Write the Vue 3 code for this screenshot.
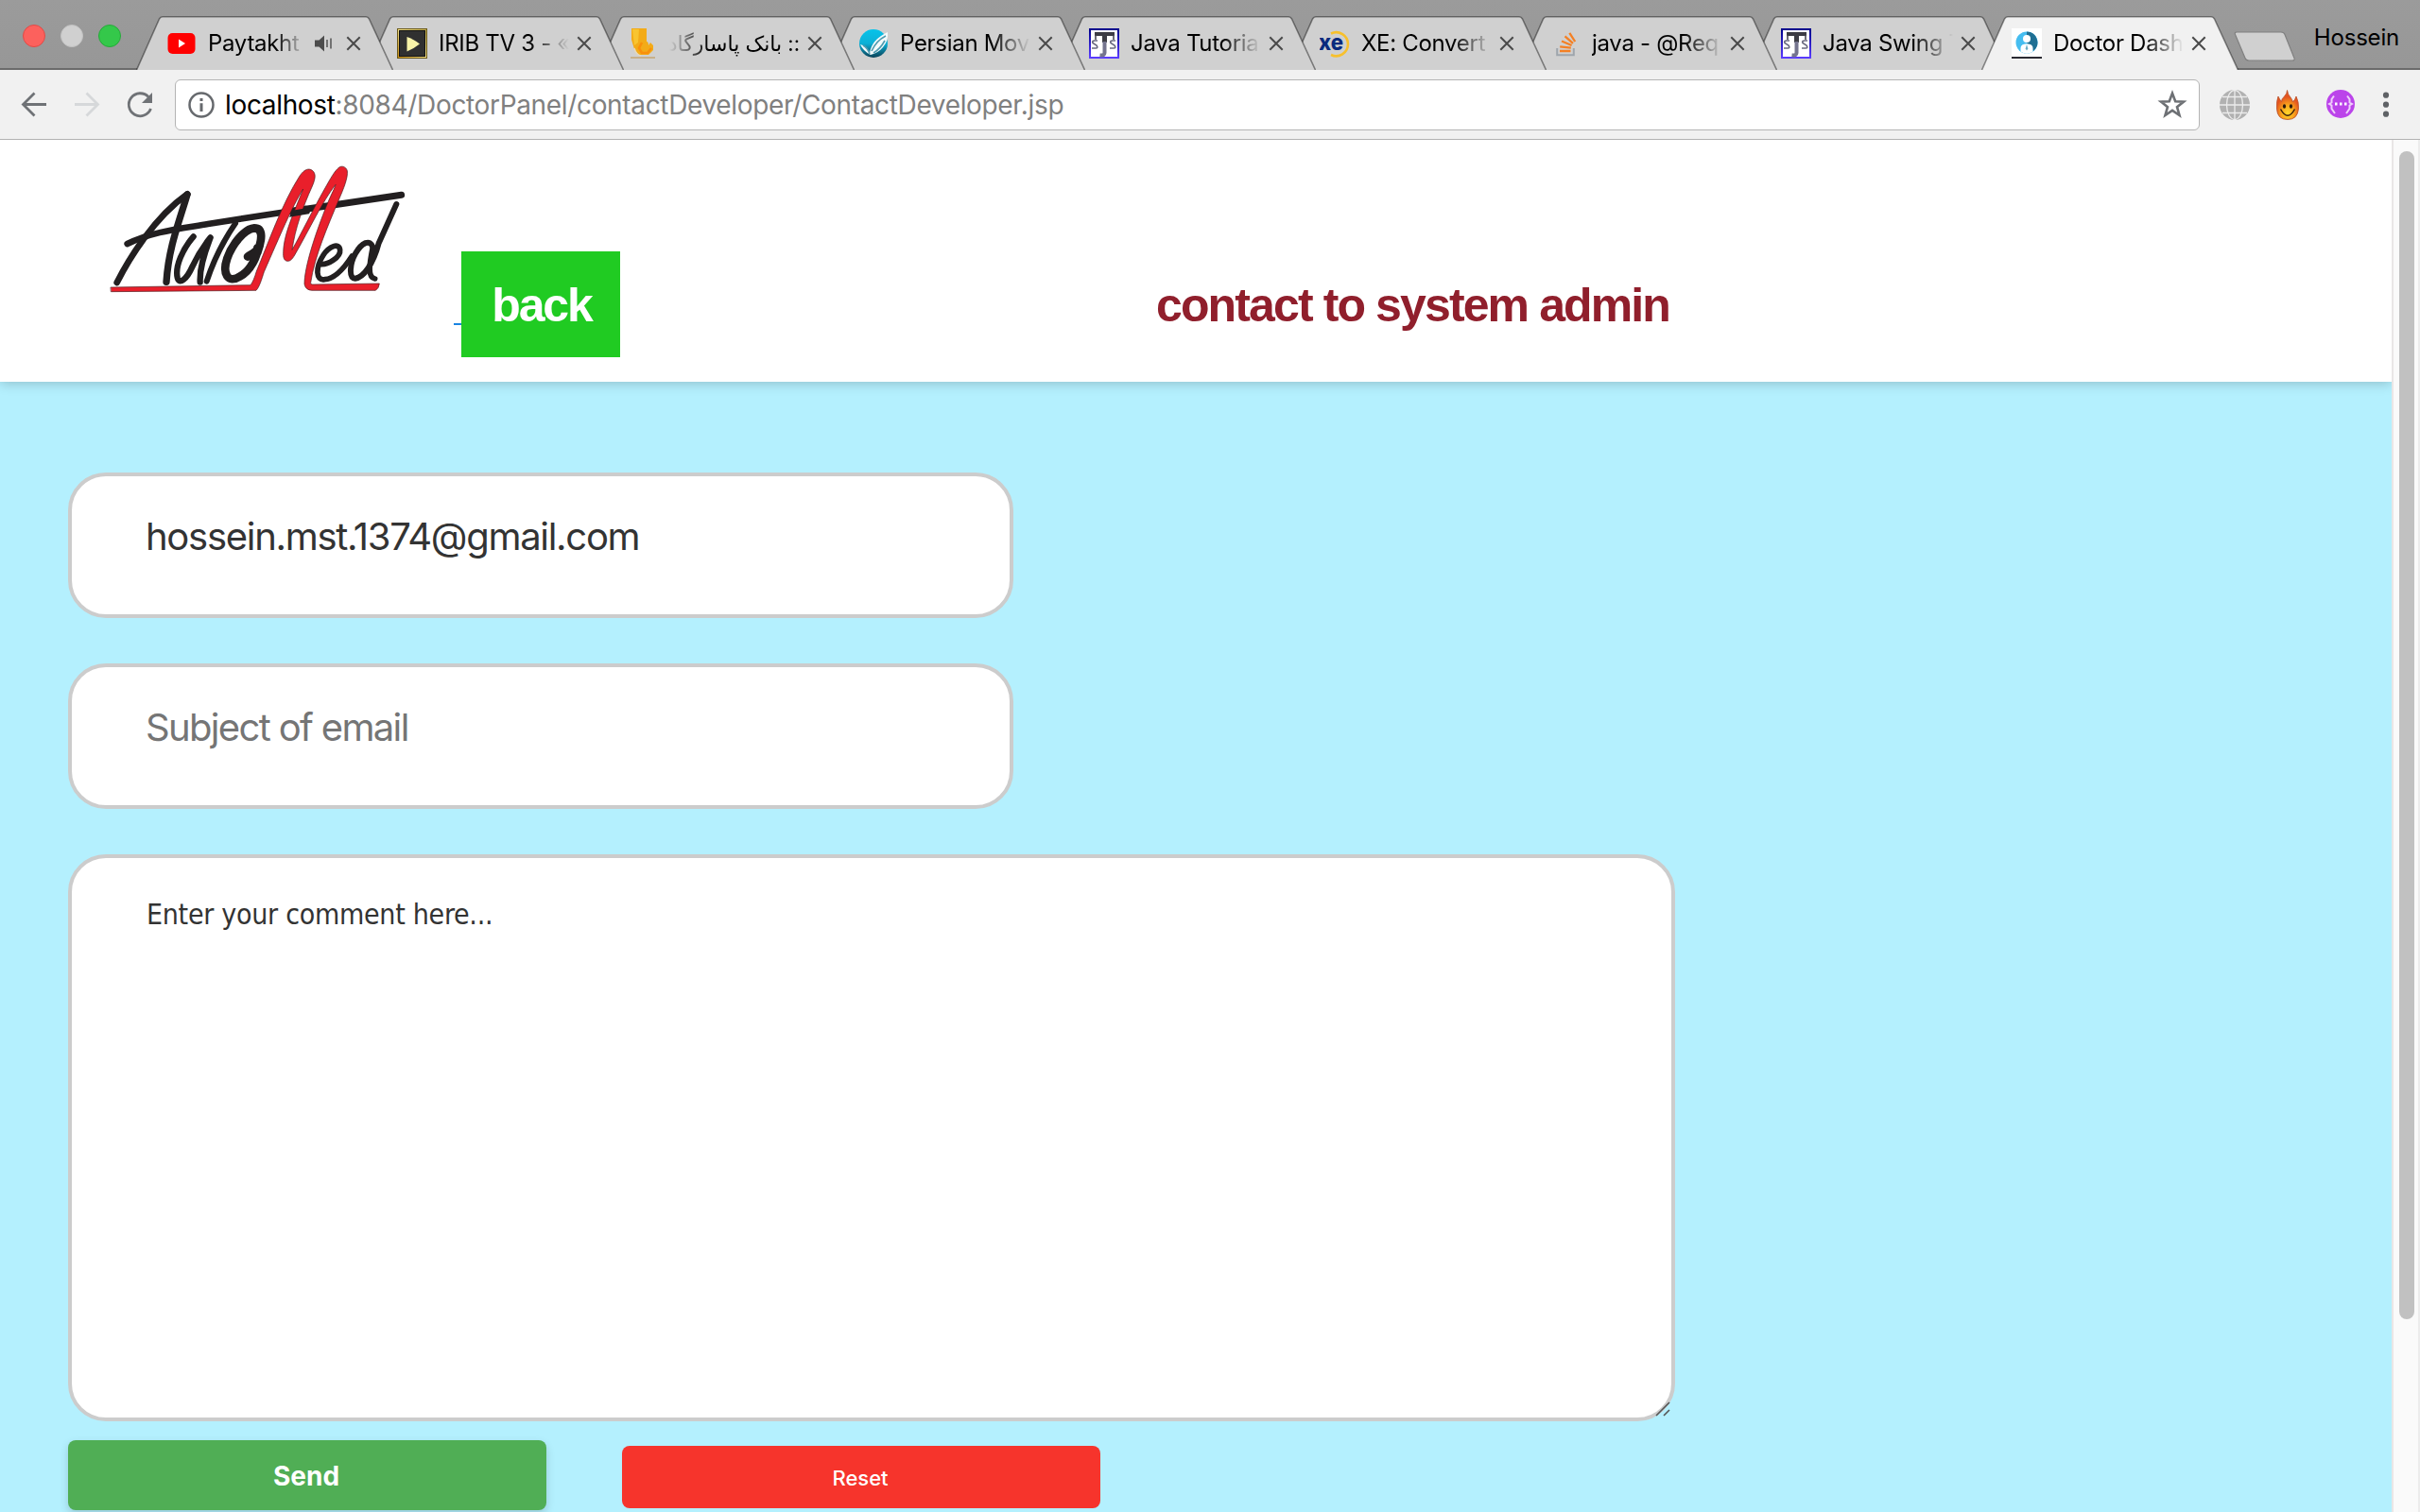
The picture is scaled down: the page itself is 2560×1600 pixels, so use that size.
<script setup>
const tabs = [
  { title: 'Paytakht', icon: 'youtube', audio: true },
  { title: 'IRIB TV 3 - «', icon: 'irib' },
  { title: ':: بانک پاسارگاد', icon: 'bank', rtl: true },
  { title: 'Persian Mov', icon: 'persian' },
  { title: 'Java Tutoria', icon: 'java' },
  { title: 'XE: Convert', icon: 'xe' },
  { title: 'java - @Req', icon: 'stack' },
  { title: 'Java Swing T', icon: 'java' },
  { title: 'Doctor Dash', icon: 'doctor', active: true },
]
</script>

<template>
  <div class="window">
    <div class="tabstrip">
      <div class="lights">
        <span class="light red"></span><span class="light grey"></span><span class="light green"></span>
      </div>
      <div class="tabs">
        <div v-for="(tab, i) in tabs" :key="i" class="tab" :class="{ active: tab.active }" :style="{ zIndex: tab.active ? 20 : 10 - i }">
          <svg class="shape" width="272" height="57" viewBox="0 0 272 57">
            <path class="fill" d="M0.5 57 L24.5 3 Q25.7 0.8 28 0.8 H243 Q245.3 0.8 246.5 3 L271.5 57" />
          </svg>
          <div class="favicon">
            <svg v-if="tab.icon === 'youtube'" width="32" height="32" viewBox="0 0 32 32">
              <rect x="1.5" y="5" width="29" height="22" rx="5" fill="#f00" />
              <path d="M13 11.5 L20 16 L13 20.5Z" fill="#fff" />
            </svg>
            <svg v-else-if="tab.icon === 'irib'" width="32" height="32" viewBox="0 0 32 32">
              <defs>
                <linearGradient id="gold" x1="0" y1="1" x2="1" y2="0"><stop offset="0" stop-color="#c98a10" /><stop offset=".5" stop-color="#f3e08a" /><stop offset="1" stop-color="#b9a548" /></linearGradient>
              </defs>
              <rect x=".5" y=".5" width="31" height="31" fill="url(#gold)" stroke="#6b5a1a" />
              <rect x="2.5" y="2.5" width="27" height="27" fill="#303030" stroke="#111" />
              <path d="M10.5 9 Q17 11 24 16.5 Q17 22 10.5 24.5Z" fill="#f8f3a8" />
            </svg>
            <svg v-else-if="tab.icon === 'bank'" width="32" height="32" viewBox="0 0 32 32">
              <path d="M4 0 H20 V14 Q22 14 22 18 L24 15 L27 18 L27 23 L22 28 H11 L7 22 L4 12Z" fill="#f3ab18" />
              <path d="M5 1 H12 L11 15 L7 18Z" fill="#f8c431" />
              <path d="M15 15 L12 21 L15 26 H21 L25 21" fill="none" stroke="#f98f0c" stroke-width="2.500" />
              <path d="M7 21 Q9 28 14 29" fill="none" stroke="#e8d9b8" stroke-width="1.500" />
              <path d="M3 31 H29" stroke="#c6a878" stroke-width="1.600" />
            </svg>
            <svg v-else-if="tab.icon === 'persian'" width="32" height="32" viewBox="0 0 32 32">
              <defs>
                <linearGradient id="teal" x1="0" y1="0" x2="0" y2="1"><stop offset="0" stop-color="#06c3ea" /><stop offset=".5" stop-color="#0db0d6" /><stop offset="1" stop-color="#0a4258" /></linearGradient>
              </defs>
              <circle cx="16" cy="16" r="15" fill="url(#teal)" />
              <path d="M2 17 Q8 18 12 26 Q14 12 31 4 Q32 13 26 20 Q21 26 13 28 Q5 24 2 17Z" fill="#f4fafb" />
              <path d="M14 24 Q19 13 29 8 M5 18 Q10 21 12 27 M16 26 Q23 22 28 13" fill="none" stroke="#4f9bb0" stroke-width="1.6" />
            </svg>
            <svg v-else-if="tab.icon === 'java'" width="32" height="32" viewBox="0 0 32 32">
              <defs>
                <linearGradient id="blue" x1="0" y1="0" x2="0" y2="1"><stop offset="0" stop-color="#00008c" /><stop offset="1" stop-color="#5a3cff" /></linearGradient>
              </defs>
              <rect x="1" y="1" width="30" height="30" fill="#fff" stroke="url(#blue)" stroke-width="2" />
              <path d="M6 4 H27 V8 H6Z M14 8 H19 V15 H14Z" fill="#3c3c44" />
              <path d="M16.500 14 V26 Q16.500 29 11.500 28.500" fill="none" stroke="#74748e" stroke-width="4" />
              <path d="M7 7 V12 M26 7 V12" stroke="#4a4a54" stroke-width="1.600" />
              <path d="M9 13 H6 Q3 13 4 15.500 L8 18 Q10 21 7 21 H3 M28 13 H25 Q22 13 23 15.500 L27 18 Q29 21 26 21 H22" fill="none" stroke="#6a6a80" stroke-width="1.700" />
            </svg>
            <svg v-else-if="tab.icon === 'xe'" width="32" height="32" viewBox="0 0 32 32">
              <path d="M12 5.500 A12.500 12.500 0 1 1 12 28" fill="none" stroke="#f7c02c" stroke-width="2.600" />
              <text x="-1" y="23" font-size="23" font-weight="800" textLength="26" lengthAdjust="spacingAndGlyphs" fill="#0a2a7d">xe</text>
            </svg>
            <svg v-else-if="tab.icon === 'stack'" width="32" height="32" viewBox="0 0 32 32">
              <path d="M7.200 21 V28.200 H24.800 V21" fill="none" stroke="#9fa6ad" stroke-width="2" />
              <path d="M10 24 H21.500 M10.200 19.300 L21.800 20.700 M12 13.500 L22.600 18 M15.500 8.300 L24 15.800 M20.300 4.800 L26.200 14" stroke="#f48024" stroke-width="2.300" />
            </svg>
            <svg v-else width="32" height="32" viewBox="0 0 32 32">
              <rect width="32" height="30" fill="#fff" />
              <rect y="30" width="32" height="2" fill="#2b2b33" />
              <circle cx="16" cy="15" r="11.500" fill="#45bdf0" />
              <path d="M16 3.500 A11.500 11.500 0 0 1 23 24 L16 15Z" fill="#1f6f93" />
              <circle cx="16" cy="11" r="4" fill="#fff" />
              <path d="M9.500 24.400 V21 Q9.500 16.500 16 16.200 Q22.500 16.500 22.500 21 V24.400 Q16 29 9.500 24.400Z" fill="#fff" />
              <path d="M16 17 L17.300 21.500 L16 23.500 L14.700 21.500Z" fill="#6aaec6" />
            </svg>
          </div>
          <div class="title" :class="{ rtl: tab.rtl, short: tab.audio }"><span>{{ tab.title }}</span></div>
          <svg v-if="tab.audio" class="audio" width="22" height="20" viewBox="0 0 22 20">
            <path d="M1 6.500 H5.500 L11 1.500 V18.500 L5.500 13.500 H1Z" fill="#4c4c4c" />
            <path d="M14 6 V14 M18 4.500 V15.500" stroke="#5a5a5a" stroke-width="1.600" />
          </svg>
          <svg class="close" width="16" height="16" viewBox="0 0 16 16"><path d="M1.300 1.300 L14.700 14.700 M14.700 1.300 L1.300 14.700" stroke="#4a4a4a" stroke-width="2" /></svg>
        </div>
      </div>
      <svg class="newtab" width="68" height="34" viewBox="0 0 68 34">
        <path d="M4 1 H51 Q54 1 55 3.500 L65 28.500 Q66 31 63 31 H17 Q14 31 13 28.500 L2.500 3.500 Q1.500 1 4 1Z" fill="#d0d0d0" stroke="#808080" stroke-width="1.200" />
      </svg>
      <span class="user">Hossein</span>
    </div>

    <div class="toolbar">
      <div class="nav">
        <svg width="30" height="30" viewBox="0 0 30 30" fill="none" stroke="#6f7276" stroke-width="2.800"><path d="M28 14.500 H3.500 M15.500 2.500 L3.500 14.500 L15.500 26.500" /></svg>
        <svg width="30" height="30" viewBox="0 0 30 30" fill="none" stroke="#d6d8da" stroke-width="2.800"><path d="M2 14.500 H26.500 M14.500 2.500 L26.500 14.500 L14.500 26.500" /></svg>
        <svg width="30" height="30" viewBox="0 0 30 30"><path d="M24 6.500 A12 12 0 1 0 26.500 19" fill="none" stroke="#6f7276" stroke-width="2.800" /><path d="M28 2 V13 H17Z" fill="#6f7276" /></svg>
      </div>
      <div class="omnibox">
        <svg width="30" height="30" viewBox="0 0 30 30"><circle cx="15" cy="15" r="12.500" fill="none" stroke="#66696d" stroke-width="2.500" /><path d="M15 8 V11 M15 13.200 V22" stroke="#66696d" stroke-width="3" /></svg>
        <span class="url"><b>localhost</b>:8084/DoctorPanel/contactDeveloper/ContactDeveloper.jsp</span>
        <svg class="star" width="32" height="32" viewBox="0 0 32 32"><path d="M16 3.800 L19.200 12.300 L28 12.600 L21 18.200 L23.500 27 L16 21.900 L8.500 27 L11 18.200 L4 12.600 L12.800 12.300Z" fill="none" stroke="#6d7074" stroke-width="2.600" /></svg>
      </div>
      <div class="extensions">
        <svg width="32" height="32" viewBox="0 0 32 32">
          <circle cx="16" cy="16" r="16" fill="#b1b1b1" />
          <path d="M16 0 V32 M0 16 H32 M3 7.500 H29 M3 24.500 H29" stroke="#ececec" stroke-width="1.300" />
          <ellipse cx="16" cy="16" rx="8.500" ry="15.500" fill="none" stroke="#ececec" stroke-width="1.300" />
        </svg>
        <svg width="32" height="32" viewBox="0 0 32 32">
          <defs><radialGradient id="flame" cx=".5" cy=".78" r=".65"><stop offset="0" stop-color="#ffd82b" /><stop offset=".45" stop-color="#f9a21c" /><stop offset=".85" stop-color="#e4541f" /></radialGradient></defs>
          <path d="M15.500 0.500 Q16 5 19 8 Q21 10.500 21.500 13 Q24 10.500 25 7 Q28 13 27.500 20 Q26.500 31.500 16 31.500 Q5 31.500 4.500 20 Q4 12 6 7 Q7.500 10.500 9.500 12.500 Q9.500 9.500 12.500 7 Q15.500 4 15.500 0.500Z" fill="url(#flame)" stroke="#b8502a" stroke-width=".8" />
          <path d="M8.500 20.500 Q16 34 23.500 20.500" fill="none" stroke="#3a210d" stroke-width="1.500" />
          <ellipse cx="12.500" cy="17.500" rx="1.600" ry="2.300" fill="#2d1a0d" /><ellipse cx="19.500" cy="17.500" rx="1.600" ry="2.300" fill="#2d1a0d" />
        </svg>
        <svg width="32" height="32" viewBox="0 0 32 32">
          <circle cx="16" cy="15" r="15" fill="#bb44ea" />
          <path d="M9 6.500 L6.500 10 V13.500 L4 15 L6.500 16.500 V20 L10 25 M23 6.500 L25.500 10 V13.500 L28 15 L25.500 16.500 V20 L22 25" fill="none" stroke="#efd0fb" stroke-width="2" />
          <path d="M10 15 H22.500" stroke="#fff" stroke-width="3" stroke-dasharray="2.500 2.500" />
        </svg>
        <svg class="menu" width="8" height="32" viewBox="0 0 8 32" fill="#5f6266"><circle cx="4" cy="5.700" r="3.100" /><circle cx="4" cy="15.700" r="3.100" /><circle cx="4" cy="25.700" r="3.100" /></svg>
      </div>
    </div>

    <div class="viewport">
      <main class="page">
        <header class="header">
          <svg class="logo" width="330" height="155" viewBox="0 0 990 465" fill="none" stroke-linecap="round" stroke-linejoin="round">
            <g stroke="#221f20">
              <path d="M41 402 C80 325 160 195 265 121" stroke-width="20" />
              <path d="M264 123 C240 205 205 290 198 400" stroke-width="22" />
              <path d="M74 279 C150 240 250 230 330 216 L640 168" stroke-width="20" />
              <path d="M600 175 L944 124" stroke-width="21" />
              <path d="M284 256 C250 295 225 350 233 386 C239 410 262 392 280 352 C300 310 325 275 338 259 C318 310 303 355 305 401" stroke-width="19" />
              <path d="M417 214 C375 275 345 340 326 398" stroke-width="18" />
              <path d="M456 320 C466 309 486 308 487 292 C489 315 465 365 432 382 C392 408 375 372 391 325 C407 279 447 231 477 229 C505 229 503 262 487 307" stroke-width="26" />
              <path d="M682 343 C710 350 752 320 749 298 C746 275 715 286 696 315 C670 355 672 397 700 392 C735 391 765 352 787 318" stroke-width="17" />
              <path d="M854 291 C845 262 818 275 798 310 C780 342 776 388 797 389 C824 386 855 342 872 277 L928 153" stroke-width="18" />
              <path d="M853 290 C842 343 836 386 860 390" stroke-width="17" />
            </g>
            <path d="M22 417 L465 410 Q475 397 484 366 C520 280 565 150 622 62 C636 42 650 38 661 46 C673 56 672 70 661 96 C630 165 607 230 597 298 C627 245 661 174 700 105 C719 71 732 48 744 38 C754 29 768 34 772 47 C775 69 760 105 747 135 C708 228 668 320 656 403 Q655 408 662 408 L874 405 Q873 420 862 427 L660 427 Q640 426 636 407 C636 353 669 250 710 149 C723 118 732 103 735 91 C693 145 656 226 605 315 C597 329 589 337 578 333 C566 327 569 309 570 290 C576 235 607 170 632 105 C595 165 560 250 508 368 C500 392 494 415 483 427 L23 431Z" fill="#e91f2b" stroke="#4a1b1e" stroke-width="2" />
            <path d="M597 173 L661 163 L651 184 L588 194Z" fill="#221f20" />
          </svg>
          <div class="back-link"><span class="back">back</span></div>
          <h1>contact to system admin</h1>
        </header>
        <form class="form" @submit.prevent>
          <div class="field filled"><span>hossein.mst.1374@gmail.com</span></div>
          <div class="field"><span>Subject of email</span></div>
          <div class="comment"><span>Enter your comment here...</span>
            <svg class="grip" width="18" height="18" viewBox="0 0 18 18"><path d="M2 16 L16 2 M10 16 L16 10" stroke="#555" stroke-width="1.600" /></svg>
          </div>
          <div class="actions">
            <button class="send">Send</button>
            <button class="reset">Reset</button>
          </div>
        </form>
      </main>
      <div class="scrollbar"><div class="thumb"></div></div>
    </div>
  </div>
</template>

<style>
body { overflow: hidden; }
</style>

<style scoped>
* { box-sizing: border-box; }
svg { display: block; flex: none; }
.window { width: 2560px; height: 1600px; overflow: hidden; display: flex; flex-direction: column; background: #fff; font-family: Inter, "DejaVu Sans", sans-serif; }
.tabstrip { position: relative; height: 74px; flex: none; display: flex; align-items: flex-start; background: linear-gradient(#9b9b9b, #979797); border-bottom: 2px solid #6b6b6b; }
.lights { display: flex; gap: 16px; padding: 26px 0 0 24px; width: 144px; flex: none; }
.light { width: 24px; height: 24px; border-radius: 50%; }
.red { background: #fc615d; border: 1px solid #e04a46; }
.grey { background: #d0d0d0; border: 1px solid #c2c2c2; }
.green { background: #34c84a; border: 1px solid #27a93a; }
.tabs { display: flex; padding-top: 17px; }
.tab { position: relative; width: 272px; height: 57px; margin-right: -28px; display: flex; align-items: center; padding-left: 32px; flex: none; }
.shape { position: absolute; left: 0; top: 0; }
.fill { fill: #d0d0d0; stroke: rgba(0, 0, 0, .42); stroke-width: 1.6; }
.active .fill { fill: #f1f1f1; }
.favicon { position: relative; width: 32px; height: 32px; flex: none; margin-top: 1px; }
.title { position: relative; width: 138px; margin-left: 12px; font-size: 24px; line-height: 40px; letter-spacing: -.3px; white-space: nowrap; overflow: hidden; color: #000; margin-top: 1px; -webkit-mask-image: linear-gradient(to right, #000 70%, transparent); mask-image: linear-gradient(to right, #000 70%, transparent); }
.title.short { width: 102px; }
.title.rtl { direction: rtl; font-size: 22px; letter-spacing: 0; -webkit-mask-image: linear-gradient(to left, #000 70%, transparent); mask-image: linear-gradient(to left, #000 70%, transparent); }
.audio { position: relative; margin: 1px 0 0 10px; width: 22px; }
.close { position: relative; margin: 1px 0 0 8px; }
.tab:first-child .close { margin-left: 12px; }
.newtab { margin: 33px 0 0 22px; }
.user { margin-left: auto; padding-right: 22px; padding-top: 20px; font-size: 24px; line-height: 40px; letter-spacing: -.2px; }
.toolbar { height: 74px; flex: none; display: flex; align-items: center; background: #f1f1f1; border-bottom: 1px solid #b2b2b2; padding-right: 32px; }
.nav { display: flex; gap: 26px; padding-left: 21px; width: 185px; flex: none; }
.omnibox { flex: none; width: 2142px; height: 54px; display: flex; align-items: center; background: #fff; border: 1px solid #b4b4b4; border-radius: 6px; padding: 0 12px 0 12px; }
.url { margin-left: 10px; font-size: 28px; line-height: 40px; color: #808080; letter-spacing: -.34px; white-space: nowrap; }
.url b { color: #000; font-weight: 400; }
.star { margin-left: auto; }
.extensions { display: flex; align-items: center; gap: 24px; margin-left: auto; }
.menu { margin-left: 4px; }
.viewport { flex: 1; display: flex; min-height: 0; }
.page { width: 2530px; flex: none; background: #b4f0fe; overflow: hidden; }
.header { height: 256px; background: #fff; box-shadow: 0 2px 12px rgba(0, 0, 0, .2); display: flex; align-items: flex-start; }
.logo { margin: 17px 0 0 110px; }
.back-link { margin: 118px 0 0 40px; display: flex; align-items: flex-start; }
.back-link::before { content: ""; width: 8px; height: 2px; background: #1a84e2; margin-top: 76px; }
.back { width: 168px; height: 112px; padding: 1px 0 0 2px; text-align: center; background: #20cb22; color: #fff; font: 700 50px/112px "Liberation Sans", Arial, sans-serif; letter-spacing: -2.1px; }
h1 { margin: 119px 0 0 567px; font: 700 50px/112px "Liberation Sans", Arial, sans-serif; letter-spacing: -1.88px; color: #901f2c; white-space: nowrap; }
.form { padding: 96px 0 0 72px; }
.field { width: 1000px; height: 154px; margin-bottom: 48px; border: 4px solid #ccc; border-radius: 40px; background: #fff; padding: 39px 78px 0; font-size: 40px; line-height: 50px; color: #757575; letter-spacing: -1.66px; }
.filled { color: #333; letter-spacing: -1.29px; }
.comment { position: relative; width: 1700px; height: 600px; border: 4px solid #ccc; border-radius: 40px; background: #fff; padding: 40px 79px; font-family: "DejaVu Sans Condensed", "DejaVu Sans", sans-serif; font-stretch: condensed; font-size: 30px; line-height: 40px; letter-spacing: -.28px; color: #333; }
.grip { position: absolute; right: 0; bottom: 0; }
.actions { display: flex; align-items: flex-start; gap: 80px; padding-top: 20px; }
button { border: 0; color: #fff; width: 506px; font-family: Inter, sans-serif; padding: 2px 2px 0 0; }
.send { height: 74px; border-radius: 8px; background: #50ae55; font-size: 28px; font-weight: 700; box-shadow: 0 4px 10px rgba(0, 0, 0, .16); }
.reset { height: 66px; margin-top: 6px; border-radius: 8px; background: #f6342c; font-size: 22px; font-weight: 500; }
.scrollbar { width: 30px; background: #fafafa; border-left: 2px solid #e9e6e6; border-right: 2px solid #ececec; padding: 12px 0 0 6px; }
.thumb { width: 16px; height: 1236px; border-radius: 8px; background: #c1c1c1; }
</style>
